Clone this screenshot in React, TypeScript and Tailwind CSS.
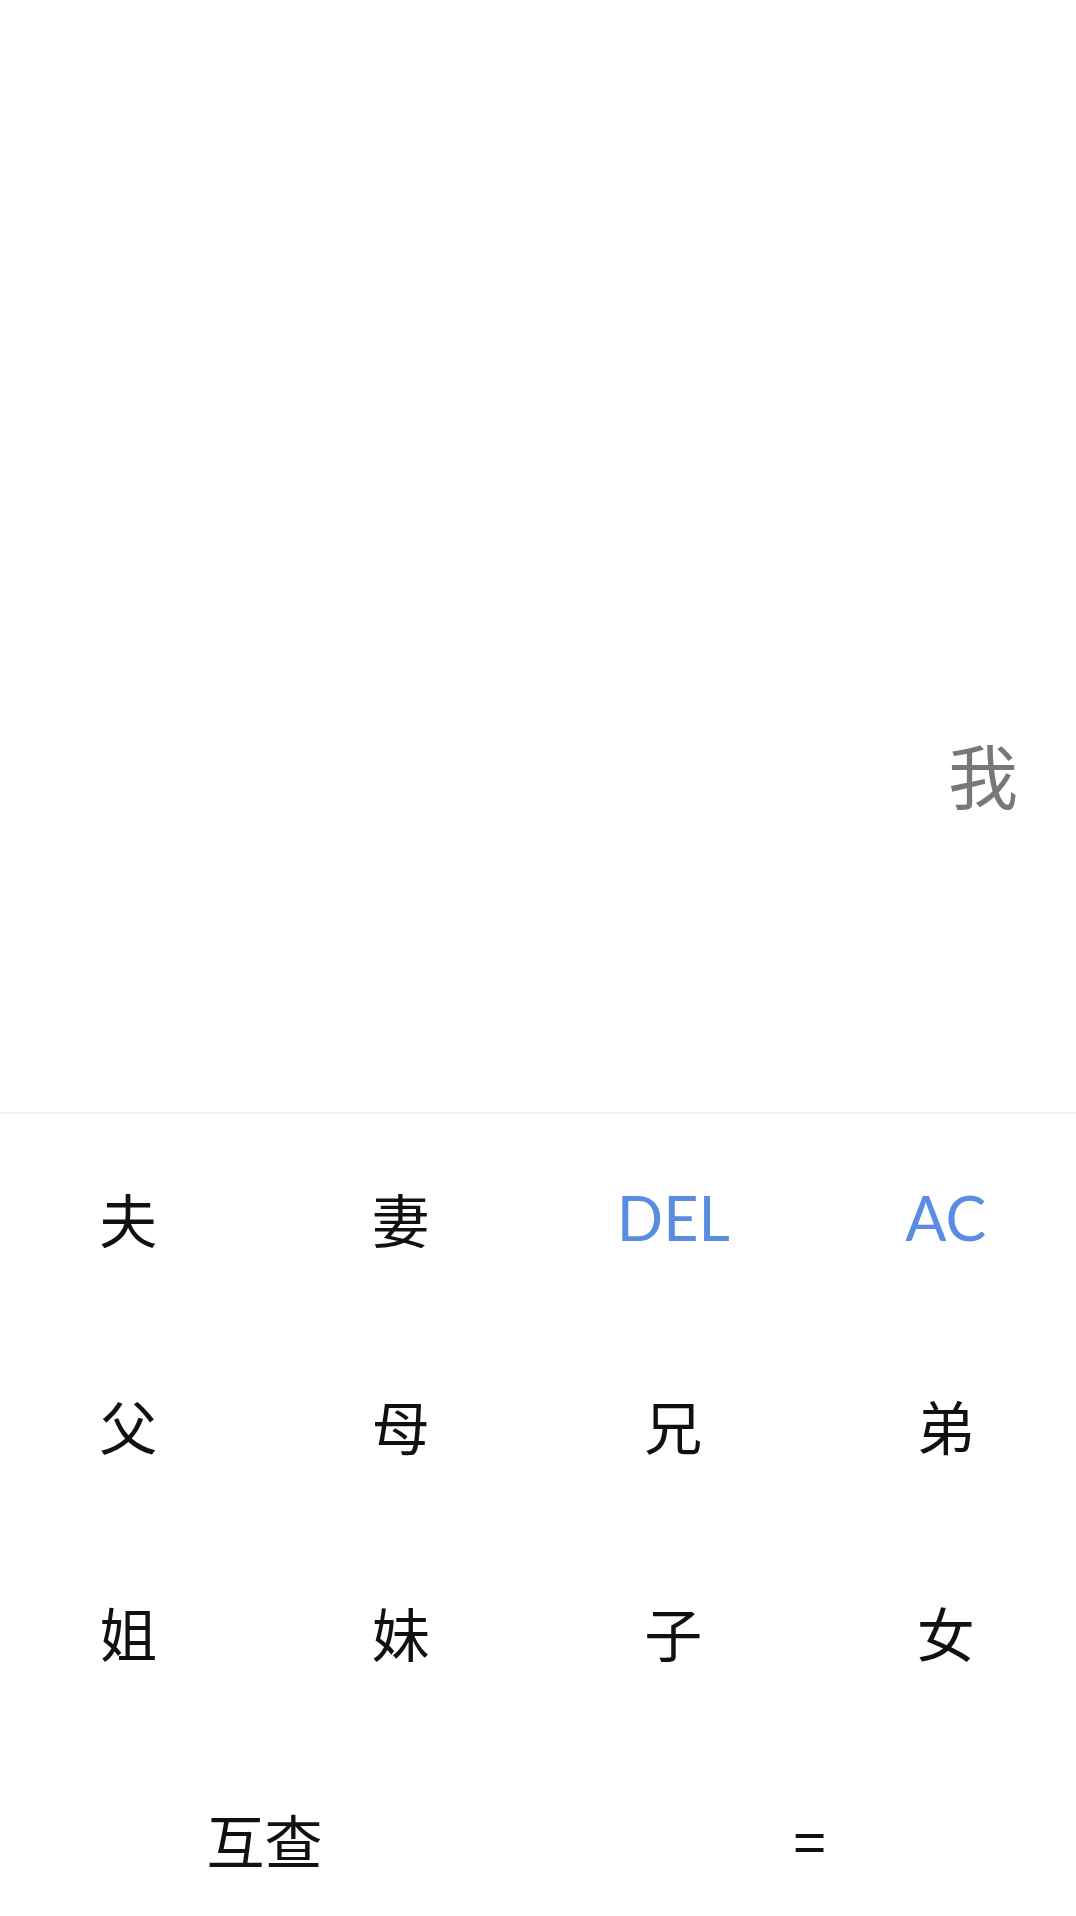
import React from 'react';

const rows: string[][] = [
  ['夫', '妻', 'DEL', 'AC'],
  ['父', '母', '兄', '弟'],
  ['姐', '妹', '子', '女'],
];

const font = { fontFamily: '"Noto Sans CJK SC", Lato, sans-serif' };

const App: React.FC = () => {
  return (
    <div className="h-[1916px] w-full overflow-hidden bg-white flex flex-col" style={font}>
      {/* Display */}
      <div className="h-[1112px] shrink-0 flex items-end justify-end pr-[58px] pb-[303px]">
        <span className="text-[70px] leading-none text-[#787878]">我</span>
      </div>

      {/* Keypad */}
      <div className="shrink-0 border-t-2 border-[#f1f1f1]">
        <div className="grid grid-cols-4 w-[1090px] -ml-[8px]">
          {rows.flat().map((k) => (
            <button
              key={k}
              className={`h-[207px] flex items-center justify-center leading-none ${
                k === 'DEL' || k === 'AC'
                  ? 'text-[61px] text-[#5a8de2] font-[Lato,sans-serif]'
                  : 'text-[58px] text-[#111]'
              }`}
            >
              {k}
            </button>
          ))}
          <button className="col-span-2 h-[207px] flex items-center justify-center text-[58px] leading-none text-[#111]">
            互查
          </button>
          <button className="col-span-2 h-[207px] flex items-center justify-center text-[58px] leading-none text-[#111]">
            =
          </button>
        </div>
      </div>
    </div>
  );
};

export default App;
